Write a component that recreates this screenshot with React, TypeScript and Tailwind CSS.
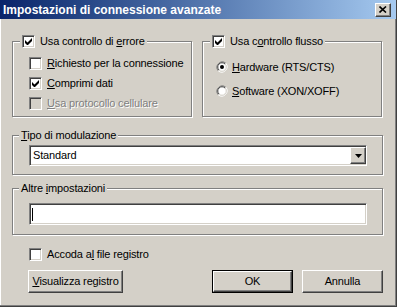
import React from "react";

const sunken =
  "border border-t-[#808080] border-l-[#808080] border-b-white border-r-white shadow-[inset_1px_1px_0_#404040,inset_-1px_-1px_0_#d4d0c8]";
const raised =
  "border border-t-white border-l-white border-b-[#404040] border-r-[#404040] shadow-[inset_-1px_-1px_0_#808080]";
const etched =
  "border border-[#808080] shadow-[inset_1px_1px_0_#fff,1px_1px_0_#fff]";

function Check({ checked = false, disabled = false }: { checked?: boolean; disabled?: boolean }) {
  return (
    <div
      className={`w-[13px] h-[13px] shrink-0 flex items-center justify-center ${sunken} ${
        disabled ? "bg-[#d4d0c8]" : "bg-white"
      }`}
    >
      {checked && (
        <svg width="7" height="7" viewBox="0 0 7 7">
          <path d="M0 2v3l2 2h1l4-4V0L2.5 4.5z" fill="#000" />
        </svg>
      )}
    </div>
  );
}

function Radio({ checked = false }: { checked?: boolean }) {
  return (
    <div className="w-[12px] h-[12px] shrink-0 relative">
      <svg width="12" height="12" viewBox="0 0 12 12">
        <circle cx="6" cy="6" r="4.5" fill="#fff" />
        <path d="M2.2 9.8A5.4 5.4 0 0 1 9.8 2.2" stroke="#808080" strokeWidth="1" fill="none" />
        <path d="M3 9A4.2 4.2 0 0 1 9 3" stroke="#404040" strokeWidth="1" fill="none" />
        <path d="M9.8 2.2A5.4 5.4 0 0 1 2.2 9.8" stroke="#fff" strokeWidth="1" fill="none" />
        <path d="M9 3A4.2 4.2 0 0 1 3 9" stroke="#d4d0c8" strokeWidth="1" fill="none" />
        {checked && <circle cx="6" cy="6" r="2" fill="#000" />}
      </svg>
    </div>
  );
}

function U({ children }: { children: React.ReactNode }) {
  return <span className="underline underline-offset-[1px]">{children}</span>;
}

export default function App() {
  return (
    <div
      className="w-[397px] h-[307px] bg-[#d4d0c8] flex flex-col text-[11px] leading-[13px] tracking-[-0.15px] text-black overflow-hidden border-r border-b border-r-[#404040] border-b-[#404040] shadow-[inset_-1px_-1px_0_#808080,inset_1px_0_0_#fff]"
      style={{ fontFamily: "'Liberation Sans', Arial, sans-serif" }}
    >
      {/* Title bar */}
      <div className="h-[19px] shrink-0 flex items-center justify-between pl-[3px] pr-[5px] bg-gradient-to-r from-[#0a246a] to-[#a6caf0]">
        <span className="text-white font-bold text-[12px] leading-[14px] tracking-[0px]">
          Impostazioni di connessione avanzate
        </span>
        <div className={`w-[16px] h-[14px] bg-[#d4d0c8] flex items-center justify-center ${raised}`}>
          <svg width="8" height="7" viewBox="0 0 8 7">
            <path d="M0.5 0.5L7 6.5M7 0.5L0.5 6.5" stroke="#000" strokeWidth="1.6" />
          </svg>
        </div>
      </div>

      <div className="flex flex-col pl-[12px] pr-[13px]">
        {/* Row 1 */}
        <div className="mt-[22px] flex gap-[10px]">
          <div className={`relative w-[180px] h-[76px] ${etched}`}>
            <div className="absolute left-[7px] -top-[7px] flex items-center gap-[5px] bg-[#d4d0c8] px-[2px]">
              <Check checked />
              <span>
                Usa controllo di <U>e</U>rrore
              </span>
            </div>
            <div className="flex flex-col pt-[11px] pl-[16px]">
              <div className="h-[20px] flex items-center gap-[5px]">
                <Check />
                <span>
                  <U>R</U>ichiesto per la connessione
                </span>
              </div>
              <div className="h-[20px] flex items-center gap-[5px]">
                <Check checked />
                <span>
                  <U>C</U>omprimi dati
                </span>
              </div>
              <div className="h-[20px] flex items-center gap-[5px]">
                <Check disabled />
                <span className="text-[#808080] [text-shadow:1px_1px_0_#fff]">
                  <U>U</U>sa protocollo cellulare
                </span>
              </div>
            </div>
          </div>

          <div className={`relative w-[180px] h-[76px] ${etched}`}>
            <div className="absolute left-[7px] -top-[7px] flex items-center gap-[5px] bg-[#d4d0c8] px-[2px]">
              <Check checked />
              <span>
                Usa c<U>o</U>ntrollo flusso
              </span>
            </div>
            <div className="flex flex-col pt-[13px] pl-[13px]">
              <div className="h-[24px] flex items-center gap-[4px]">
                <Radio checked />
                <span>
                  <U>H</U>ardware (RTS/CTS)
                </span>
              </div>
              <div className="h-[24px] flex items-center gap-[4px]">
                <Radio />
                <span>
                  <U>S</U>oftware (XON/XOFF)
                </span>
              </div>
            </div>
          </div>
        </div>

        {/* Tipo di modulazione */}
        <div className={`relative mt-[18px] h-[40px] ${etched}`}>
          <div className="absolute left-[6px] -top-[7px] bg-[#d4d0c8] px-[2px] h-[13px]">
            <U>T</U>ipo di modulazione
          </div>
          <div className="pt-[9px] pl-[16px] pr-[15px]">
            <div className={`h-[21px] bg-white flex items-center justify-between ${sunken}`}>
              <span className="pl-[3px]">Standard</span>
              <div className={`w-[16px] h-[17px] bg-[#d4d0c8] flex items-center justify-center ${raised}`}>
                <svg width="7" height="4" viewBox="0 0 7 4">
                  <path d="M0 0h7L3.5 4z" fill="#000" />
                </svg>
              </div>
            </div>
          </div>
        </div>

        {/* Altre impostazioni */}
        <div className={`relative mt-[13px] h-[47px] ${etched}`}>
          <div className="absolute left-[6px] -top-[7px] bg-[#d4d0c8] px-[2px] h-[13px]">
            Altre <U>i</U>mpostazioni
          </div>
          <div className="pt-[14px] pl-[16px] pr-[15px]">
            <div className={`h-[22px] bg-white flex items-center ${sunken}`}>
              <div className="ml-[2px] w-[1px] h-[13px] bg-black" />
            </div>
          </div>
        </div>

        {/* Accoda */}
        <div className="mt-[13px] pl-[17px] h-[13px] flex items-center gap-[5px]">
          <Check />
          <span>
            Accoda a<U>l</U> file registro
          </span>
        </div>

        {/* Buttons */}
        <div className="mt-[9px] flex items-center pl-[16px]">
          <div className={`w-[95px] h-[23px] bg-[#d4d0c8] flex items-center justify-center ${raised}`}>
            <span>
              <U>V</U>isualizza registro
            </span>
          </div>
          <div className="ml-auto w-[81px] h-[23px] border border-black">
            <div className={`w-full h-full bg-[#d4d0c8] flex items-center justify-center ${raised}`}>
              OK
            </div>
          </div>
          <div className={`ml-[9px] w-[81px] h-[23px] bg-[#d4d0c8] flex items-center justify-center ${raised}`}>
            Annulla
          </div>
        </div>
      </div>
    </div>
  );
}
